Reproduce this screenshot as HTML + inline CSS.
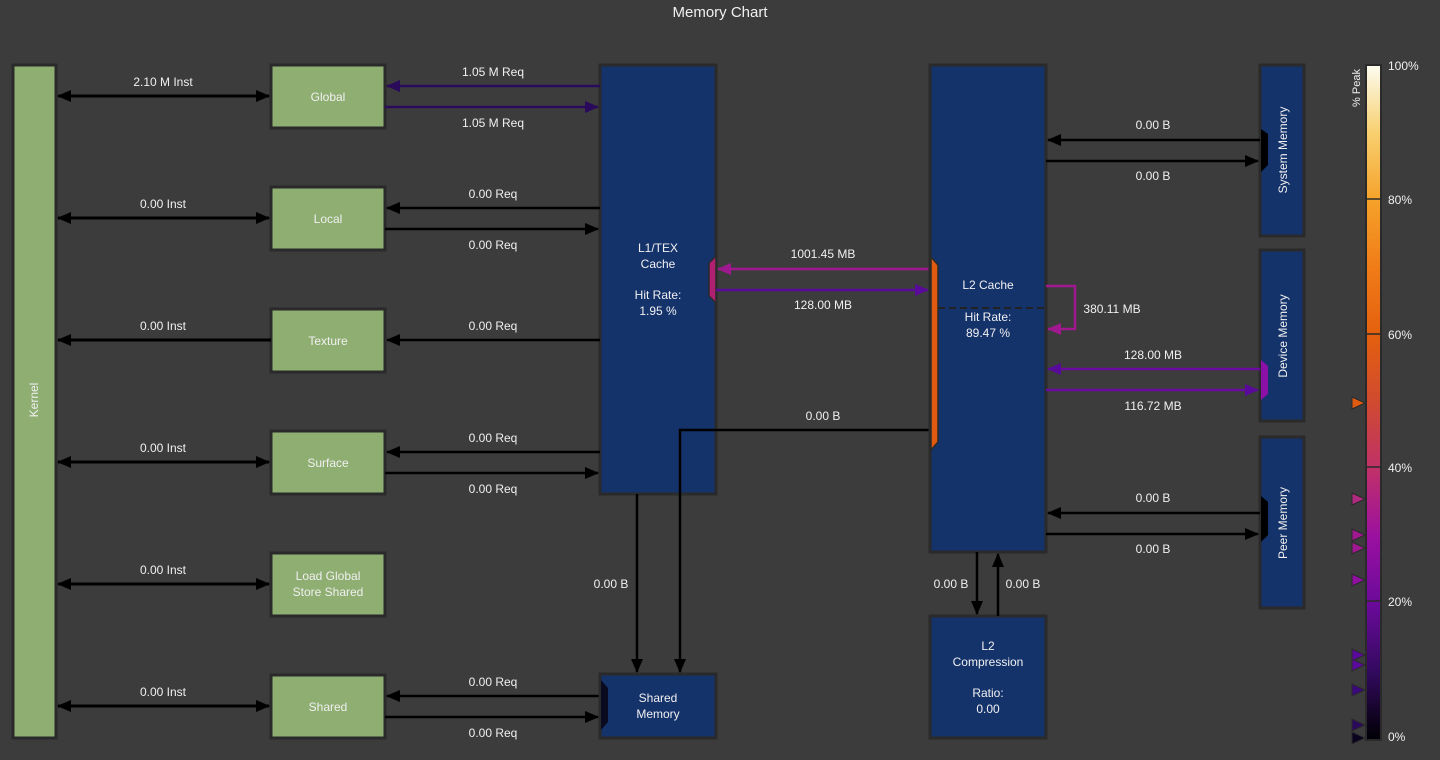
<!DOCTYPE html>
<html><head><meta charset="utf-8"><style>
html,body{margin:0;padding:0;background:#3c3c3c;}
svg{display:block;font-family:"Liberation Sans",sans-serif;}
text{fill:#f0f0f0;font-size:12px;text-anchor:middle;}
</style></head><body>
<svg width="1440" height="760" viewBox="0 0 1440 760">
<defs>
<marker id="ak" markerWidth="10" markerHeight="10" refX="9" refY="5" orient="auto" markerUnits="userSpaceOnUse"><path d="M0,0 L12,5 L0,10Z" fill="#000"/></marker>
<marker id="ap" markerWidth="14" markerHeight="12" refX="13" refY="6" orient="auto-start-reverse" markerUnits="userSpaceOnUse"><path d="M0,0 L14,6 L0,12Z" fill="#000"/></marker>
<marker id="ad" markerWidth="14" markerHeight="12" refX="13" refY="6" orient="auto" markerUnits="userSpaceOnUse"><path d="M0,0 L14,6 L0,12Z" fill="#2a0a5a"/></marker>
<marker id="am" markerWidth="14" markerHeight="12" refX="13" refY="6" orient="auto" markerUnits="userSpaceOnUse"><path d="M0,0 L14,6 L0,12Z" fill="#a0188f"/></marker>
<marker id="av" markerWidth="14" markerHeight="12" refX="13" refY="6" orient="auto" markerUnits="userSpaceOnUse"><path d="M0,0 L14,6 L0,12Z" fill="#5a0a9a"/></marker>
<linearGradient id="inf" x1="0" y1="1" x2="0" y2="0">
<stop offset="0" stop-color="#000004"/><stop offset="0.1" stop-color="#320a5e"/><stop offset="0.2" stop-color="#6a0a9a"/><stop offset="0.3" stop-color="#9a10a0"/><stop offset="0.4" stop-color="#c0306a"/><stop offset="0.5" stop-color="#d04a30"/><stop offset="0.6" stop-color="#e4600e"/><stop offset="0.7" stop-color="#f07c18"/><stop offset="0.8" stop-color="#f5a22a"/><stop offset="0.9" stop-color="#f8d070"/><stop offset="1" stop-color="#fcfdf0"/>
</linearGradient>
</defs>
<text x="720" y="17" style="font-size:15px">Memory Chart</text>

<!-- Kernel -->
<rect x="13" y="65" width="43" height="673" fill="#8fae72" stroke="#2a2a2a" stroke-width="3"/>
<text transform="translate(38,400) rotate(-90)">Kernel</text>

<!-- green boxes -->
<g fill="#8fae72" stroke="#2a2a2a" stroke-width="3">
<rect x="271" y="65" width="114" height="63"/>
<rect x="271" y="187" width="114" height="63"/>
<rect x="271" y="309" width="114" height="63"/>
<rect x="271" y="431" width="114" height="63"/>
<rect x="271" y="553" width="114" height="63"/>
<rect x="271" y="675" width="114" height="63"/>
</g>
<text x="328" y="101">Global</text>
<text x="328" y="223">Local</text>
<text x="328" y="345">Texture</text>
<text x="328" y="467">Surface</text>
<text x="328" y="580">Load Global</text>
<text x="328" y="596">Store Shared</text>
<text x="328" y="711">Shared</text>

<!-- kernel arrows -->
<g stroke="#000" stroke-width="3">
<line x1="58" y1="96" x2="269" y2="96" marker-start="url(#ap)" marker-end="url(#ap)"/>
<line x1="58" y1="218" x2="269" y2="218" marker-start="url(#ap)" marker-end="url(#ap)"/>
<line x1="58" y1="340" x2="271" y2="340" marker-start="url(#ap)"/>
<line x1="58" y1="462" x2="269" y2="462" marker-start="url(#ap)" marker-end="url(#ap)"/>
<line x1="58" y1="584" x2="269" y2="584" marker-start="url(#ap)" marker-end="url(#ap)"/>
<line x1="58" y1="706" x2="269" y2="706" marker-start="url(#ap)" marker-end="url(#ap)"/>
</g>
<text x="163" y="86">2.10 M Inst</text>
<text x="163" y="208">0.00 Inst</text>
<text x="163" y="330">0.00 Inst</text>
<text x="163" y="452">0.00 Inst</text>
<text x="163" y="574">0.00 Inst</text>
<text x="163" y="696">0.00 Inst</text>

<!-- L1 -->
<rect x="600" y="65" width="116" height="429" fill="#15336b" stroke="#2a2a2a" stroke-width="3"/>
<text x="658" y="252">L1/TEX</text>
<text x="658" y="268">Cache</text>
<text x="658" y="299">Hit Rate:</text>
<text x="658" y="315">1.95 %</text>
<path d="M709,263 L716,256 L716,303 L709,296Z" fill="#b02070" stroke="#2a2a2a" stroke-width="1.5"/>

<!-- L1 <-> green -->
<g stroke-width="2.5">
<line x1="600" y1="86" x2="387" y2="86" stroke="#2a0a5a" marker-end="url(#ad)"/>
<line x1="385" y1="107" x2="598" y2="107" stroke="#2a0a5a" marker-end="url(#ad)"/>
<line x1="600" y1="208" x2="387" y2="208" stroke="#000" marker-end="url(#ap)"/>
<line x1="385" y1="229" x2="598" y2="229" stroke="#000" marker-end="url(#ap)"/>
<line x1="600" y1="340" x2="387" y2="340" stroke="#000" marker-end="url(#ap)"/>
<line x1="600" y1="452" x2="387" y2="452" stroke="#000" marker-end="url(#ap)"/>
<line x1="385" y1="473" x2="598" y2="473" stroke="#000" marker-end="url(#ap)"/>
<line x1="600" y1="696" x2="387" y2="696" stroke="#000" marker-end="url(#ap)"/>
<line x1="385" y1="717" x2="598" y2="717" stroke="#000" marker-end="url(#ap)"/>
</g>
<text x="493" y="76">1.05 M Req</text>
<text x="493" y="127">1.05 M Req</text>
<text x="493" y="198">0.00 Req</text>
<text x="493" y="249">0.00 Req</text>
<text x="493" y="330">0.00 Req</text>
<text x="493" y="442">0.00 Req</text>
<text x="493" y="493">0.00 Req</text>
<text x="493" y="686">0.00 Req</text>
<text x="493" y="737">0.00 Req</text>

<!-- Shared memory -->
<rect x="600" y="674" width="116" height="64" fill="#15336b" stroke="#2a2a2a" stroke-width="3"/>
<path d="M601,680 L608,688 L608,722 L601,730Z" fill="#0a0a20"/>
<text x="658" y="702">Shared</text>
<text x="658" y="718">Memory</text>
<g stroke="#000" stroke-width="2.5">
<line x1="637" y1="494" x2="637" y2="672" marker-end="url(#ap)"/>
<polyline points="930,430 680,430 680,672" fill="none" marker-end="url(#ap)"/>
</g>
<text x="611" y="588">0.00 B</text>
<text x="823" y="420">0.00 B</text>

<!-- L1 <-> L2 -->
<g stroke-width="2.5">
<line x1="930" y1="269" x2="718" y2="269" stroke="#a0188f" marker-end="url(#am)"/>
<line x1="716" y1="290" x2="928" y2="290" stroke="#5a0a9a" marker-end="url(#av)"/>
</g>
<text x="823" y="258">1001.45 MB</text>
<text x="823" y="309">128.00 MB</text>

<!-- L2 -->
<rect x="930" y="65" width="116" height="487" fill="#15336b" stroke="#2a2a2a" stroke-width="3"/>
<path d="M931,257 L938,265 L938,442 L931,450Z" fill="#e05a10" stroke="#2a2a2a" stroke-width="1.5"/>
<line x1="938" y1="308" x2="1046" y2="308" stroke="#222" stroke-width="2" stroke-dasharray="7,4"/>
<text x="988" y="289">L2 Cache</text>
<text x="988" y="321">Hit Rate:</text>
<text x="988" y="337">89.47 %</text>
<polyline points="1046,286 1075,286 1075,329 1048,329" fill="none" stroke="#a0188f" stroke-width="2.5" marker-end="url(#am)"/>
<text x="1112" y="313">380.11 MB</text>

<!-- L2 compression -->
<rect x="930" y="616" width="116" height="122" fill="#15336b" stroke="#2a2a2a" stroke-width="3"/>
<text x="988" y="650">L2</text>
<text x="988" y="666">Compression</text>
<text x="988" y="697">Ratio:</text>
<text x="988" y="713">0.00</text>
<g stroke="#000" stroke-width="2.5">
<line x1="977" y1="552" x2="977" y2="614" marker-end="url(#ap)"/>
<line x1="998" y1="616" x2="998" y2="554" marker-end="url(#ap)"/>
</g>
<text x="951" y="588">0.00 B</text>
<text x="1023" y="588">0.00 B</text>

<!-- right memories -->
<g fill="#15336b" stroke="#2a2a2a" stroke-width="3">
<rect x="1260" y="65" width="44" height="171"/>
<rect x="1260" y="250" width="44" height="171"/>
<rect x="1260" y="437" width="44" height="171"/>
</g>
<text transform="translate(1287,150) rotate(-90)">System Memory</text>
<text transform="translate(1287,336) rotate(-90)">Device Memory</text>
<text transform="translate(1287,523) rotate(-90)">Peer Memory</text>
<path d="M1261,129 L1268,134 L1268,165 L1261,172Z" fill="#000"/>
<path d="M1261,360 L1268,366 L1268,394 L1261,400Z" fill="#8a10a8"/>
<path d="M1261,496 L1268,502 L1268,535 L1261,542Z" fill="#000"/>
<g stroke-width="2.5">
<line x1="1260" y1="140" x2="1048" y2="140" stroke="#000" marker-end="url(#ap)"/>
<line x1="1046" y1="161" x2="1258" y2="161" stroke="#000" marker-end="url(#ap)"/>
<line x1="1260" y1="369" x2="1048" y2="369" stroke="#6a0aa0" marker-end="url(#av)"/>
<line x1="1046" y1="390" x2="1258" y2="390" stroke="#6a0aa0" marker-end="url(#av)"/>
<line x1="1260" y1="513" x2="1048" y2="513" stroke="#000" marker-end="url(#ap)"/>
<line x1="1046" y1="534" x2="1258" y2="534" stroke="#000" marker-end="url(#ap)"/>
</g>
<text x="1153" y="129">0.00 B</text>
<text x="1153" y="180">0.00 B</text>
<text x="1153" y="359">128.00 MB</text>
<text x="1153" y="410">116.72 MB</text>
<text x="1153" y="502">0.00 B</text>
<text x="1153" y="553">0.00 B</text>

<!-- legend -->
<rect x="1366" y="65" width="15" height="675" fill="url(#inf)" stroke="#2a2a2a" stroke-width="2"/>
<g stroke="#2a2a2a" stroke-width="1.5">
<line x1="1366" y1="199" x2="1381" y2="199"/><line x1="1366" y1="334" x2="1381" y2="334"/>
<line x1="1366" y1="467" x2="1381" y2="467"/><line x1="1366" y1="601" x2="1381" y2="601"/>
</g>
<g style="text-anchor:start">
<text x="1388" y="70" style="text-anchor:start">100%</text>
<text x="1388" y="204" style="text-anchor:start">80%</text>
<text x="1388" y="339" style="text-anchor:start">60%</text>
<text x="1388" y="472" style="text-anchor:start">40%</text>
<text x="1388" y="606" style="text-anchor:start">20%</text>
<text x="1388" y="741" style="text-anchor:start">0%</text>
</g>
<text transform="translate(1360,88) rotate(-90)" style="font-size:11px">% Peak</text>
<g stroke="#2a2a2a" stroke-width="1">
<path d="M1352,397 L1365,403 L1352,409Z" fill="#e05a10"/>
<path d="M1352,493 L1365,499 L1352,505Z" fill="#b02a80"/>
<path d="M1352,529 L1365,535 L1352,541Z" fill="#a0188f"/>
<path d="M1352,542 L1365,548 L1352,554Z" fill="#a0188f"/>
<path d="M1352,574 L1365,580 L1352,586Z" fill="#9010a0"/>
<path d="M1352,649 L1365,655 L1352,661Z" fill="#5a0a9a"/>
<path d="M1352,659 L1365,665 L1352,671Z" fill="#5a0a9a"/>
<path d="M1352,684 L1365,690 L1352,696Z" fill="#3a0a7a"/>
<path d="M1352,719 L1365,725 L1352,731Z" fill="#2a0a5a"/>
<path d="M1352,732 L1365,738 L1352,744Z" fill="#0a0420"/>
</g>
</svg>
</body></html>
